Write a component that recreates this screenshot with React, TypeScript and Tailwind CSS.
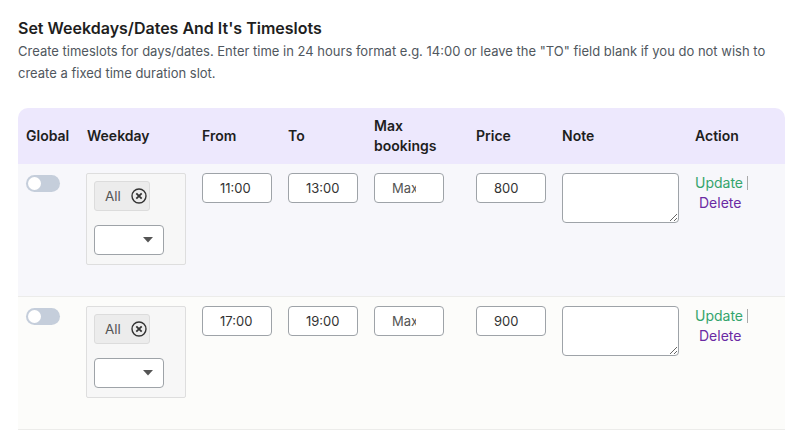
import React from "react";

type Slot = { from: string; to: string; price: string; bg: string };

const slots: Slot[] = [
  { from: "11:00", to: "13:00", price: "800", bg: "bg-[#f7f7fb]" },
  { from: "17:00", to: "19:00", price: "900", bg: "bg-[#fcfcfa]" },
];

const cols = "grid grid-cols-[61px_115px_86px_86px_102px_86px_133px_98px]";

const Toggle = () => (
  <div className="mt-[2px] flex h-[17px] w-[34px] items-center rounded-full bg-[#c5cedb] px-[2px]">
    <div className="h-[13px] w-[13px] rounded-full bg-white" />
  </div>
);

const TextBox = ({ value, placeholder }: { value?: string; placeholder?: string }) => (
  <input
    className={`h-[30px] w-[70px] rounded-[4px] border border-[#9ea3a8] bg-white pl-[17px] text-[13px] text-[#333] outline-none placeholder:text-[#555] ${
      placeholder ? "pr-[27px]" : "pr-1"
    }`}
    type="text"
    defaultValue={value}
    placeholder={placeholder}
  />
);

const Weekday = () => (
  <div className="h-[92px] w-[100px] rounded-[2px] border border-[#dedede] bg-[#f7f7f7] pl-[7px] pt-[7px]">
    <div className="flex h-[30px] w-[56px] items-center gap-[10px] rounded-[3px] border border-[#dcdcdc] bg-[#ececec] pl-[10px] text-[13.5px] text-[#555]">
      <span>All</span>
      <svg width="16" height="16" viewBox="0 0 16 16" fill="none" stroke="#333" strokeWidth="1.4">
        <circle cx="8" cy="8" r="7" />
        <path d="M5.3 5.3l5.4 5.4M10.7 5.3l-5.4 5.4" strokeWidth="1.8" />
      </svg>
    </div>
    <div className="mt-[14px] flex h-[30px] w-[70px] items-center justify-end rounded-[4px] border border-[#9ea3a8] bg-white pr-[10px]">
      <svg width="10" height="6" viewBox="0 0 10 6">
        <path d="M0 0h10L5 5.5z" fill="#555" />
      </svg>
    </div>
  </div>
);

const Row = ({ slot }: { slot: Slot }) => (
  <div className={`${cols} h-[133px] items-start border-b border-[#ececea] pt-[9px] ${slot.bg}`}>
    <div className="px-2">
      <Toggle />
    </div>
    <div className="pl-[7px]">
      <Weekday />
    </div>
    <div className="px-2">
      <TextBox value={slot.from} />
    </div>
    <div className="px-2">
      <TextBox value={slot.to} />
    </div>
    <div className="px-2">
      <TextBox placeholder="Max bookings" />
    </div>
    <div className="px-2">
      <TextBox value={slot.price} />
    </div>
    <div className="px-2">
      <textarea className="block h-[50px] w-[117px] rounded-[4px] border border-[#9ea3a8] bg-white p-1 text-[13px] outline-none" />
    </div>
    <div className="px-2 text-[14px] leading-[20px]">
      <div className="flex items-center">
        <span className="text-[#34a46c]">Update</span>
        <span className="ml-[4px] h-[14px] w-px bg-[#aaa]" />
      </div>
      <div className="ml-1 text-[#6a2aa3]">Delete</div>
    </div>
  </div>
);

export default function App() {
  return (
    <div className="min-h-screen bg-white pl-[18px] pt-[18px] font-['Inter','Noto_Sans',sans-serif]">
      <h2 className="text-[16px] font-semibold leading-[20px] text-[#1e1e1e]">
        Set Weekdays/Dates And It's Timeslots
      </h2>
      <p className="mt-[2px] text-[13px] leading-[22px] text-[#50575e]">
        Create timeslots for days/dates. Enter time in 24 hours format e.g. 14:00 or leave the "TO" field blank if you do not wish to
        <br />
        create a fixed time duration slot.
      </p>
      <div className="mt-[24px] w-[767px]">
        <div className={`${cols} h-[56px] items-center rounded-t-[10px] bg-[#ede8fd] text-[14px] font-semibold leading-[20px] text-[#1e1e1e]`}>
          <div className="px-2">Global</div>
          <div className="px-2">Weekday</div>
          <div className="px-2">From</div>
          <div className="px-2">To</div>
          <div className="px-2">
            Max
            <br />
            bookings
          </div>
          <div className="px-2">Price</div>
          <div className="px-2">Note</div>
          <div className="px-2">Action</div>
        </div>
        {slots.map((s) => (
          <Row key={s.from} slot={s} />
        ))}
      </div>
    </div>
  );
}
